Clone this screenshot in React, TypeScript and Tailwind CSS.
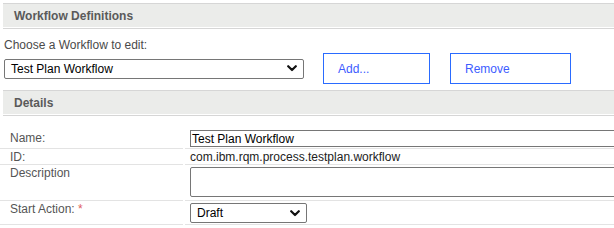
import React from "react";

function Chevron() {
  return (
    <svg width="10" height="7" viewBox="0 0 10 7" className="shrink-0">
      <path d="M1.2 1.2 L5 5 L8.8 1.2" fill="none" stroke="#111" strokeWidth="2.2" strokeLinecap="round" strokeLinejoin="round" />
    </svg>
  );
}

function SectionHeader({ title }: { title: string }) {
  return (
    <div className="ml-[3px]">
      <div className="border-t border-[#d6d6d6]" />
      <div className="h-[23px] bg-[#ebecea] pl-[11px] flex items-center font-bold text-[#5a5a5a]">{title}</div>
      <div className="h-[1px]" />
      <div className="border-t border-[#d6d6d6]" />
    </div>
  );
}

export default function App() {
  return (
    <div className="w-[614px] h-[228px] overflow-hidden bg-white text-[12px] leading-[14px] font-['Liberation_Sans',Arial,sans-serif] text-[#444]">
      <div className="h-[3px]" />
      <SectionHeader title="Workflow Definitions" />
      <div className="pl-[4px] pt-[9px] text-[#4a4a4a]">Choose a Workflow to edit:</div>
      <div className="flex items-center pl-[4px] mt-[1px] h-[31px]">
        <div className="w-[300px] h-[20px] border border-[#767676] rounded-[2px] flex items-center justify-between pl-[6px] pr-[6px] text-black">
          <span>Test Plan Workflow</span>
          <Chevron />
        </div>
        <div className="ml-[19px] w-[107px] h-[31px] border border-[#2a6bff] flex items-center pl-[14px] text-[#3d5cff]">Add...</div>
        <div className="ml-[20px] w-[121px] h-[31px] border border-[#2a6bff] flex items-center pl-[14px] text-[#3d5cff]">Remove</div>
      </div>
      <div className="h-[6px]" />
      <SectionHeader title="Details" />
      <div className="mt-[12px]">
        <div className="flex h-[21px]">
          <div className="w-[183px] shrink-0 border-b border-[#e3e3e3] pl-[10px] flex items-center text-[#555]">Name:</div>
          <div className="flex-1 min-w-0 ml-[2px] border-b border-[#e3e3e3] pl-[5px] pt-[2px]">
            <div className="w-[440px] h-[17px] border border-[#767676] flex items-center pl-[1px] text-black">Test Plan Workflow</div>
          </div>
        </div>
        <div className="flex h-[16px]">
          <div className="w-[183px] shrink-0 border-b border-[#e3e3e3] pl-[10px] flex items-center text-[#555]">ID:</div>
          <div className="flex-1 min-w-0 ml-[2px] border-b border-[#e3e3e3] pl-[5px] flex items-center text-[#222]">com.ibm.rqm.process.testplan.workflow</div>
        </div>
        <div className="flex h-[36px]">
          <div className="w-[183px] shrink-0 border-b border-[#e3e3e3] pl-[10px] pt-[1px] text-[#555]">Description</div>
          <div className="flex-1 min-w-0 ml-[2px] border-b border-[#e3e3e3] pl-[5px] pt-[2px]">
            <div className="w-[440px] h-[30px] border border-[#767676] rounded-[2px]" />
          </div>
        </div>
        <div className="flex h-[24px]">
          <div className="w-[183px] shrink-0 border-b border-[#e3e3e3] pl-[10px] pt-[1px] text-[#555]">
            Start Action: <span className="text-[#e06060]">*</span>
          </div>
          <div className="flex-1 min-w-0 ml-[2px] border-b border-[#e3e3e3] pl-[5px] pt-[2px]">
            <div className="w-[117px] h-[20px] border border-[#767676] rounded-[2px] flex items-center justify-between pl-[6px] pr-[6px] text-black">
              <span>Draft</span>
              <Chevron />
            </div>
          </div>
        </div>
      </div>
    </div>
  );
}
